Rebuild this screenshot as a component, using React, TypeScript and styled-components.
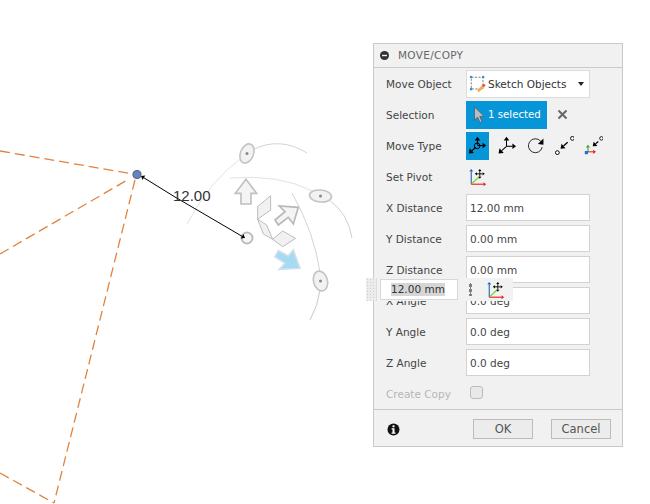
import React from 'react';
import styled, { createGlobalStyle } from 'styled-components';

const GlobalStyle = createGlobalStyle`
    html, body {
        margin: 0;
        background: #ffffff;
    }
`;

const Stage = styled.div`
    position: relative;
    width: 650px;
    height: 504px;
    overflow: hidden;
    background: #ffffff;
    font-family: "DejaVu Sans", "Liberation Sans", sans-serif;
`;

const Canvas = styled.svg`
    position: absolute;
    left: 0;
    top: 0;
`;

const DimText = styled.text`
    font-family: "Liberation Sans", Arial, sans-serif;
    font-size: 15px;
    fill: #333333;
`;

const Panel = styled.div`
    position: absolute;
    left: 373px;
    top: 43px;
    width: 250px;
    height: 404px;
    box-sizing: border-box;
    display: flex;
    flex-flow: column nowrap;
    background: #f1f1f1;
    border: 1px solid #c9c9c9;
`;

const Header = styled.div`
    height: 24px;
    box-sizing: border-box;
    flex: none;
    display: flex;
    align-items: center;
    gap: 9px;
    padding: 0 0 1px 6px;
    border-bottom: 1px solid #c9c9c9;
    font-size: 10.5px;
    letter-spacing: 0.3px;
    color: #666666;
`;

const Body = styled.div`
    flex: 1;
`;

const Row = styled.div`
    height: 31px;
    display: flex;
    align-items: center;
    padding-left: 12px;
`;

const Label = styled.div<{ $muted?: boolean }>`
    width: 80px;
    flex: none;
    font-size: 10.5px;
    color: ${p => (p.$muted ? '#b6b6b6' : '#444444')};
`;

const SelectBox = styled.div`
    width: 124px;
    height: 28px;
    box-sizing: border-box;
    display: flex;
    align-items: center;
    gap: 1px;
    padding: 0 5px 0 2px;
    background: #ffffff;
    border: 1px solid #dcdcdc;
    font-size: 10.5px;
    color: #333333;
`;

const Caret = styled.span`
    margin-left: auto;
    width: 0;
    height: 0;
    border-left: 3.5px solid transparent;
    border-right: 3.5px solid transparent;
    border-top: 4px solid #222222;
`;

const SelectedButton = styled.div`
    width: 81px;
    height: 28px;
    box-sizing: border-box;
    display: flex;
    align-items: center;
    gap: 3px;
    padding-left: 7px;
    background: #0696d7;
    font-size: 10.2px;
    color: #ffffff;
`;

const Clear = styled.span`
    margin-left: 10px;
    display: flex;
`;

const TypeRow = styled.div`
    display: flex;
    align-items: center;
    gap: 6px;
`;

const TypeButton = styled.div<{ $active?: boolean }>`
    width: 23px;
    height: 28px;
    display: flex;
    align-items: center;
    justify-content: center;
    background: ${p => (p.$active ? '#0696d7' : 'transparent')};
`;

const ValueBox = styled.div`
    width: 124px;
    height: 27px;
    box-sizing: border-box;
    display: flex;
    align-items: center;
    padding-left: 3px;
    background: #ffffff;
    border: 1px solid #d2d2d2;
    font-size: 10.5px;
    color: #444444;
`;

const CheckBox = styled.div`
    width: 13px;
    height: 13px;
    margin: 0 0 3px 4px;
    box-sizing: border-box;
    background: #e9e9e9;
    border: 1px solid #bdbdbd;
    border-radius: 3px;
`;

const Footer = styled.div`
    height: 37px;
    flex: none;
    box-sizing: border-box;
    display: flex;
    align-items: center;
    gap: 18px;
    padding: 2px 11px 0 13px;
    border-top: 1px solid #c9c9c9;
`;

const InfoIcon = styled.svg`
    margin-right: auto;
`;

const FooterButton = styled.div`
    width: 60px;
    height: 20px;
    box-sizing: border-box;
    display: flex;
    align-items: center;
    justify-content: center;
    background: #ececec;
    border: 1px solid #bcbcbc;
    font-size: 11.5px;
    color: #555555;
`;

const FloatBar = styled.div`
    position: absolute;
    left: 366px;
    top: 278px;
    width: 147px;
    height: 23px;
    display: flex;
    align-items: center;
    background: #f2f2f2;
`;

const Grip = styled.div`
    width: 11px;
    height: 23px;
    flex: none;
    box-sizing: border-box;
    background: #ececec;
    border-right: 1px solid #dddddd;
    background-image: radial-gradient(#d0d0d0 0.6px, transparent 0.7px);
    background-size: 3px 3px;
`;

const FloatInput = styled.div`
    width: 78px;
    height: 21px;
    margin-left: 3px;
    flex: none;
    box-sizing: border-box;
    display: flex;
    align-items: center;
    padding-left: 10px;
    background: #ffffff;
    border: 1px solid #d8d8d8;
    font-size: 10.5px;
    color: #333333;
`;

const Highlight = styled.span`
    background: #d6d6d6;
    line-height: 13px;
`;

const FloatDots = styled.div`
    width: 3px;
    height: 13px;
    margin-left: 11px;
    flex: none;
    background-image: radial-gradient(#808080 1.3px, transparent 1.4px);
    background-size: 3px 5px;
`;

const PivotSlot = styled.div`
    margin-left: 15px;
    display: flex;
`;

const ArrowLine = ({ x1, y1, x2, y2, color = '#000', head = 3.2, width = 1.2 }: {
    x1: number; y1: number; x2: number; y2: number; color?: string; head?: number; width?: number;
}) => {
    const a = Math.atan2(y2 - y1, x2 - x1);
    const bx = x2 - Math.cos(a) * head * 1.3;
    const by = y2 - Math.sin(a) * head * 1.3;
    const nx = -Math.sin(a) * head;
    const ny = Math.cos(a) * head;
    return (
        <>
            <line x1={x1} y1={y1} x2={bx} y2={by} stroke={color} strokeWidth={width} />
            <polygon points={`${x2},${y2} ${bx + nx},${by + ny} ${bx - nx},${by - ny}`} fill={color} />
        </>
    );
};

const IconFree = () => (
    <svg width="19" height="19" viewBox="0 0 24 24">
        <ArrowLine x1={12} y1={11} x2={12} y2={1} head={3.5} width={1.5} />
        <ArrowLine x1={12} y1={12} x2={23} y2={12} head={3.5} width={1.5} />
        <ArrowLine x1={10} y1={14} x2={1} y2={22} head={4} width={1.5} />
        <circle cx="11.5" cy="12.5" r="3.6" fill="none" stroke="#000" strokeWidth="1.2" />
    </svg>
);

const IconAxes = () => (
    <svg width="19" height="19" viewBox="0 0 24 24">
        <ArrowLine x1={12} y1={13} x2={12} y2={1} head={3.5} width={1.3} />
        <ArrowLine x1={12} y1={13} x2={24} y2={13} head={3.5} width={1.3} />
        <ArrowLine x1={12} y1={13} x2={2} y2={22} head={4} width={1.3} />
    </svg>
);

const IconRotate = () => (
    <svg width="19" height="19" viewBox="0 0 24 24">
        <path d="M18.5 6.5 A8.8 8.8 0 1 0 20.5 14" fill="none" stroke="#222" strokeWidth="1.2" />
        <polygon points="22,3 22,11 15,10" fill="#000" />
    </svg>
);

const IconPointToPoint = () => (
    <svg width="19" height="19" viewBox="0 0 24 24">
        <circle cx="3" cy="21" r="2.4" fill="#fff" stroke="#000" strokeWidth="1.2" />
        <circle cx="22" cy="3" r="2.4" fill="#fff" stroke="#000" strokeWidth="1.2" />
        <ArrowLine x1={16} y1={8} x2={7} y2={16} head={3.8} width={1.6} />
    </svg>
);

const IconPointToPosition = () => (
    <svg width="19" height="19" viewBox="0 0 24 24">
        <circle cx="22" cy="3" r="2.2" fill="#fff" stroke="#000" strokeWidth="1.1" />
        <ArrowLine x1={18} y1={7} x2={11} y2={13} head={3.6} width={1.6} />
        <ArrowLine x1={5} y1={20} x2={5} y2={11} color="#2aa52a" head={2.6} width={1.3} />
        <ArrowLine x1={5} y1={20} x2={15} y2={20} color="#e01818" head={2.6} width={1.3} />
        <rect x="1" y="19" width="4" height="4" fill="#1e6fd0" />
    </svg>
);

const IconPivot = () => (
    <svg width="18" height="18" viewBox="0 0 20 20">
        <ArrowLine x1={2.5} y1={18} x2={2.5} y2={1} color="#1565b8" head={2.2} width={1.2} />
        <ArrowLine x1={2.5} y1={18} x2={19} y2={18} color="#e01818" head={2.2} width={1.2} />
        <line x1="3" y1="17.5" x2="11" y2="10" stroke="#7ed321" strokeWidth="1.3" />
        <ArrowLine x1={12} y1={6.5} x2={12} y2={1} head={1.8} width={1} />
        <ArrowLine x1={12} y1={6.5} x2={12} y2={12} head={1.8} width={1} />
        <ArrowLine x1={12} y1={6.5} x2={6.5} y2={6.5} head={1.8} width={1} />
        <ArrowLine x1={12} y1={6.5} x2={17.5} y2={6.5} head={1.8} width={1} />
    </svg>
);

const IconSketch = () => (
    <svg width="18" height="18" viewBox="0 0 20 20">
        <rect x="2.5" y="2.5" width="13" height="13" fill="none" stroke="#555" strokeWidth="0.8" strokeDasharray="2.5 1.5" />
        <rect x="1" y="1" width="2.5" height="2.5" fill="#1e9be0" />
        <rect x="14.5" y="1" width="2.5" height="2.5" fill="#1e9be0" />
        <rect x="1" y="14.5" width="2.5" height="2.5" fill="#1e9be0" />
        <line x1="10" y1="18" x2="16" y2="12" stroke="#f0b050" strokeWidth="3" />
        <line x1="15.5" y1="12.5" x2="17.5" y2="10.5" stroke="#e8505a" strokeWidth="3" />
    </svg>
);

const IconCursor = () => (
    <svg width="12" height="18" viewBox="0 0 12 18">
        <path d="M1.5 1 L1.5 14 L4.6 11.2 L7 16.5 L9 15.5 L6.8 10.4 L11 10.2 Z" fill="#b9bec4" stroke="#555b63" strokeWidth="0.8" />
    </svg>
);

const IconClose = () => (
    <svg width="11" height="11" viewBox="0 0 11 11">
        <path d="M1.5 1.5 L9.5 9.5 M9.5 1.5 L1.5 9.5" stroke="#666666" strokeWidth="2" />
    </svg>
);

const IconCollapse = () => (
    <svg width="9" height="9" viewBox="0 0 9 9">
        <circle cx="4.5" cy="4.5" r="4.5" fill="#333333" />
        <rect x="2" y="3.8" width="5" height="1.4" fill="#f0f0f0" />
    </svg>
);

const fields = [
    { label: 'X Distance', value: '12.00 mm' },
    { label: 'Y Distance', value: '0.00 mm' },
    { label: 'Z Distance', value: '0.00 mm' },
    { label: 'X Angle', value: '0.0 deg' },
    { label: 'Y Angle', value: '0.0 deg' },
    { label: 'Z Angle', value: '0.0 deg' },
];

const sketchLines = [
    'M0 151 L133 174',
    'M0 254 L129 179',
    'M135 180 L54 503',
    'M0 473 L54 503',
];

export default function App() {
    return (
        <Stage>
            <GlobalStyle />
            <Canvas width="650" height="504" viewBox="0 0 650 504">
                {sketchLines.map(d => (
                    <path key={d} d={d} fill="none" stroke="#e2823f" strokeWidth="1.3" strokeDasharray="10 5" />
                ))}

                <path d="M187 224 Q 210 180 244 156" fill="none" stroke="#e2e2e2" strokeWidth="1" />
                <path d="M252 150 Q 280 136 307 153" fill="none" stroke="#d4d4d4" strokeWidth="1" />
                <path d="M230 178 Q 280 174 312 191" fill="none" stroke="#e2e2e2" strokeWidth="1" />
                <path d="M329 200 Q 348 213 352 238" fill="none" stroke="#d0d0d0" strokeWidth="1" />
                <path d="M292 193 Q 314 232 320 272" fill="none" stroke="#d4d4d4" strokeWidth="1" />
                <path d="M320 290 Q 318 306 310 320" fill="none" stroke="#c8c8c8" strokeWidth="1" />

                <g fill="#f2f2f2" stroke="#c4c4c4" strokeWidth="1.6">
                    <ellipse cx="247" cy="153.5" rx="6.5" ry="10" transform="rotate(22 247 153.5)" />
                    <ellipse cx="320.5" cy="196" rx="11" ry="6" transform="rotate(5 320.5 196)" />
                    <ellipse cx="320.5" cy="281" rx="7" ry="10" transform="rotate(-15 320.5 281)" />
                </g>
                <g fill="#888888">
                    <circle cx="247" cy="153.5" r="1.5" />
                    <circle cx="320.5" cy="196" r="1.5" />
                    <circle cx="320.5" cy="281" r="1.5" />
                </g>

                <g transform="translate(120 130) scale(0.3333)">
                    <polygon points="413,230 452,197 452,240 413,268" fill="#f1f1f1" stroke="#bcbcbc" strokeWidth="3" />
                    <polygon points="413,268 440,285 458,328 430,312" fill="#f1f1f1" stroke="#bcbcbc" strokeWidth="3" />
                    <polygon points="458,328 488,303 527,325 488,350" fill="#f1f1f1" stroke="#bcbcbc" strokeWidth="3" />
                    <polygon points="378,148 346,190 363,190 363,222 393,222 393,190 410,190" fill="#f4f4f4" stroke="#c0c0c0" strokeWidth="5" />
                    <polygon points="535,232 520,282 505,262 475,285 465,270 495,245 478,228" fill="#f4f4f4" stroke="#b8b8b8" strokeWidth="5" />
                    <polygon points="540,415 520,360 505,378 475,362 465,380 495,400 478,418" fill="#a6d9f2" stroke="#cfe0ec" strokeWidth="5" />
                </g>

                <circle cx="247" cy="238" r="5.5" fill="#f6f6f6" stroke="#bdbdbd" strokeWidth="2" />
                <ArrowLine x1={175} y1={197} x2={141} y2={176} head={2.6} width={1} />
                <ArrowLine x1={175} y1={197} x2={245} y2={238} head={2.6} width={1} />
                <circle cx="137" cy="174.5" r="4" fill="#5f86c6" stroke="#5a6270" strokeWidth="1.2" />
                <DimText x="173" y="201">12.00</DimText>
            </Canvas>

            <Panel>
                <Header>
                    <IconCollapse />
                    <span>MOVE/COPY</span>
                </Header>
                <Body>
                    <Row>
                        <Label>Move Object</Label>
                        <SelectBox>
                            <IconSketch />
                            <span>Sketch Objects</span>
                            <Caret />
                        </SelectBox>
                    </Row>
                    <Row>
                        <Label>Selection</Label>
                        <SelectedButton>
                            <IconCursor />
                            <span>1 selected</span>
                        </SelectedButton>
                        <Clear>
                            <IconClose />
                        </Clear>
                    </Row>
                    <Row>
                        <Label>Move Type</Label>
                        <TypeRow>
                            <TypeButton $active>
                                <IconFree />
                            </TypeButton>
                            <TypeButton>
                                <IconAxes />
                            </TypeButton>
                            <TypeButton>
                                <IconRotate />
                            </TypeButton>
                            <TypeButton>
                                <IconPointToPoint />
                            </TypeButton>
                            <TypeButton>
                                <IconPointToPosition />
                            </TypeButton>
                        </TypeRow>
                    </Row>
                    <Row>
                        <Label>Set Pivot</Label>
                        <TypeButton>
                            <IconPivot />
                        </TypeButton>
                    </Row>
                    {fields.map(f => (
                        <Row key={f.label}>
                            <Label>{f.label}</Label>
                            <ValueBox>{f.value}</ValueBox>
                        </Row>
                    ))}
                    <Row>
                        <Label $muted>Create Copy</Label>
                        <CheckBox />
                    </Row>
                </Body>
                <Footer>
                    <InfoIcon width="13" height="13" viewBox="0 0 13 13">
                        <circle cx="6.5" cy="6.5" r="6" fill="#111111" />
                        <rect x="5.5" y="2.3" width="2" height="2" fill="#ffffff" />
                        <path d="M4.6 5.3 H7.5 V9.5 H8.5 V10.7 H4.6 V9.5 H5.5 V6.5 H4.6 Z" fill="#ffffff" />
                    </InfoIcon>
                    <FooterButton>OK</FooterButton>
                    <FooterButton>Cancel</FooterButton>
                </Footer>
            </Panel>

            <FloatBar>
                <Grip />
                <FloatInput>
                    <Highlight>12.00 mm</Highlight>
                </FloatInput>
                <FloatDots />
                <PivotSlot>
                    <IconPivot />
                </PivotSlot>
            </FloatBar>
        </Stage>
    );
}
